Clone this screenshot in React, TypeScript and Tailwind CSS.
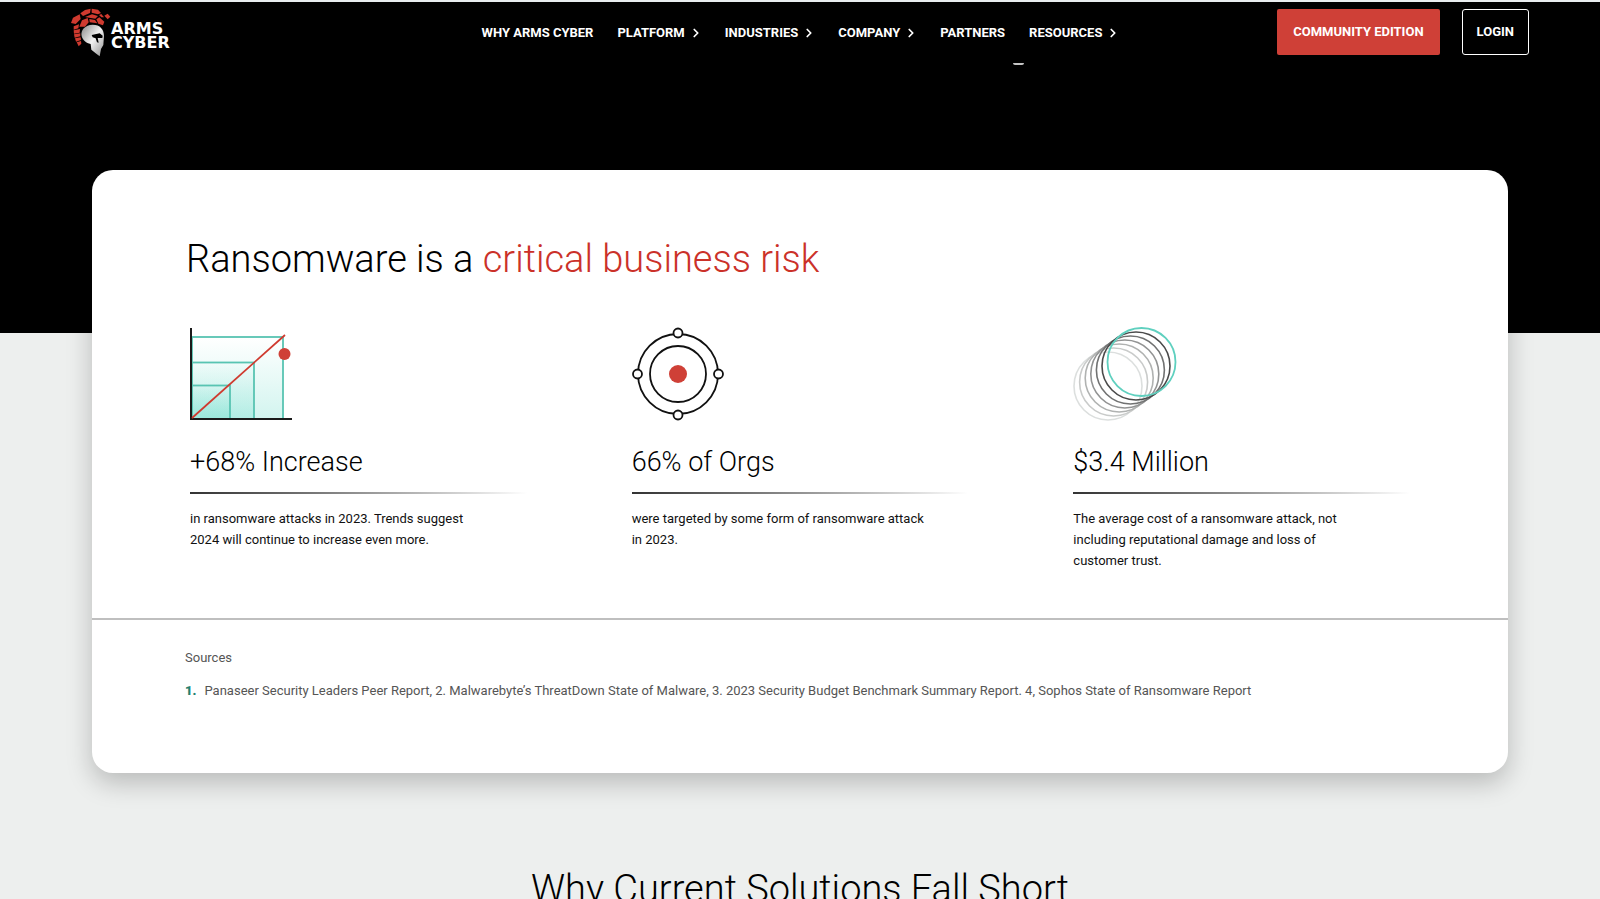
import { ChevronRight } from "lucide-react"

const navItems = [
  { label: "WHY ARMS CYBER", menu: false },
  { label: "PLATFORM", menu: true },
  { label: "INDUSTRIES", menu: true },
  { label: "COMPANY", menu: true },
  { label: "PARTNERS", menu: false },
  { label: "RESOURCES", menu: true },
]

const stats = [
  {
    icon: <GrowthIcon />,
    title: "+68% Increase",
    text: "in ransomware attacks in 2023. Trends suggest 2024 will continue to increase even more.",
  },
  {
    icon: <TargetIcon />,
    title: "66% of Orgs",
    text: "were targeted by some form of ransomware attack in 2023.",
  },
  {
    icon: <RingsIcon />,
    title: "$3.4 Million",
    text: "The average cost of a ransomware attack, not including reputational damage and loss of customer trust.",
  },
]

function Logo() {
  return (
    <a href="#" aria-label="Arms Cyber" className="flex items-center">
      <svg viewBox="33 22 108 150" className="h-[50px] w-9 overflow-visible" aria-hidden="true">
        <defs>
          <linearGradient id="helmet" x1="0" y1="0" x2="1" y2="1">
            <stop offset="0" stopColor="#8a8a8a" />
            <stop offset="0.5" stopColor="#f2f2f2" />
            <stop offset="1" stopColor="#8f8f8f" />
          </linearGradient>
        </defs>
        {/* crest */}
        <g fill="#cf3a2f">
          <path d="M33 67 L39 51 L59 41 L62 55 L47 70 Z" />
          <path d="M61 38 L75 28 L92 24 L90 37 L69 46 Z" />
          <path d="M95 24 L114 27 L123 37 L114 41 L95 36 Z" />
          <path d="M133 45 L143 39 L151 48 L143 56 Z" />
          <path d="M58 78 L66 59 L83 52 L86 65 L75 78 Z" />
          <path d="M75 49 L96 41 L114 46 L106 54 L88 51 Z" />
          <path d="M88 55 L105 58 L112 68 L89 65 Z" />
          <path d="M109 56 L118 50 L133 63 L129 74 L115 69 Z" />
          <path d="M117 43 L124 40 L132 50 L124 50 Z" />
          <path d="M41 77 L57 71 L55 83 L41 87 Z" />
          <path d="M41 89 L60 85 L59 96 L42 99 Z" />
          <path d="M42 101 L61 98 L61 107 L44 111 Z" />
          <path d="M45 113 L62 110 L63 118 L48 123 Z" />
          <path d="M50 125 L63 121 L64 129 L56 137 Z" />
        </g>
        <path
          d="M65 107 C61 88 75 73 98 72 C121 72 131 86 132 105 L130 133 L123 145 L119 167 L107 158 L94 147 L92 130 C78 128 69 119 65 107 Z"
          fill="url(#helmet)"
        />
        {/* visor */}
        <path d="M95 103 L119 98 L128 105 L127 112 L113 112 L116 126 L111 125 L107 113 L98 110 Z" fill="#000" />
      </svg>
      <span className="ml-1 pt-1.5 font-['DejaVu_Sans',sans-serif] text-base leading-[14px] font-bold text-white">
        ARMS
        <br />
        CYBER
      </span>
    </a>
  )
}

function GrowthIcon() {
  return (
    <svg viewBox="0 0 104 94" className="h-[94px] w-[104px]" aria-hidden="true">
      <defs>
        <linearGradient id="growth" x1="0" y1="0" x2="0" y2="1">
          <stop offset="0" stopColor="#5fd9c6" stopOpacity="0" />
          <stop offset="1" stopColor="#5fd9c6" stopOpacity="0.28" />
        </linearGradient>
      </defs>
      <g fill="url(#growth)" stroke="#58c4b2" strokeWidth="1.8">
        <rect x="2" y="10" width="91" height="82" />
        <rect x="2" y="35.5" width="62" height="56.5" />
        <rect x="2" y="58.5" width="38" height="33.5" />
      </g>
      <path d="M1 1 V92 H102" fill="none" stroke="#1a1a1a" strokeWidth="2" />
      <path d="M2 91 L95 8" stroke="#cf3a2f" strokeWidth="1.8" />
      <circle cx="94.5" cy="27" r="6" fill="#cf4037" />
    </svg>
  )
}

function TargetIcon() {
  return (
    <svg viewBox="0 0 94 94" className="h-[94px] w-[94px]" aria-hidden="true">
      <g fill="#fff" stroke="#111" strokeWidth="1.8">
        <circle cx="46" cy="47" r="40" />
        <circle cx="46" cy="47" r="28" />
        <circle cx="46" cy="6" r="4.5" />
        <circle cx="46" cy="88" r="4.5" />
        <circle cx="5.5" cy="47" r="4.5" />
        <circle cx="86.5" cy="47" r="4.5" />
      </g>
      <circle cx="46" cy="47" r="9" fill="#cf4037" />
    </svg>
  )
}

function RingsIcon() {
  const rings = ["#dcdfde", "#c9cbca", "#b0b2b1", "#929393", "#717272", "#4a4a4a"]
  return (
    <svg viewBox="0 0 104 94" className="h-[94px] w-[104px]" aria-hidden="true">
      <g fill="none" strokeWidth="1.6">
        {rings.map((color, i) => (
          <circle key={color} cx={35 + i * 5.6} cy={59 - i * 4} r="34" stroke={color} />
        ))}
        <circle cx="68.5" cy="35" r="34" stroke="#5fd0bf" strokeWidth="1.8" />
      </g>
    </svg>
  )
}

function Header() {
  return (
    <header className="relative grid h-[62px] grid-cols-[1fr_auto_1fr] items-center bg-black px-[71px] text-white">
      <Logo />
      <nav className="flex items-center gap-6 text-[13px] leading-5 font-bold whitespace-nowrap">
        {navItems.map((item) => (
          <a key={item.label} href="#" className="flex items-center gap-1">
            {item.label}
            {item.menu && <ChevronRight className="-mr-0.5 h-3.5 w-3.5" strokeWidth={3} />}
          </a>
        ))}
      </nav>
      <div className="flex justify-end gap-[22px] pb-0.5 text-[13px] font-bold whitespace-nowrap">
        <button className="h-[46px] rounded-[2px] bg-[#cf4037] px-4">COMMUNITY EDITION</button>
        <button className="h-[46px] rounded-[3px] border border-white px-[14px]">LOGIN</button>
      </div>
      <span className="absolute top-[61px] left-[1013px] h-0.5 w-[11px] rounded-b-full bg-[#c4c4c4]" />
    </header>
  )
}

export default function App() {
  return (
    <div className="border-t-2 border-[#e9edef] bg-[#edefee] font-['Roboto',sans-serif] text-black">
      <Header />
      <main className="bg-[linear-gradient(#000_269px,#edefee_269px)] px-[92px] pt-[106px]">
        <section className="rounded-[21px] bg-white shadow-[0_10px_26px_rgba(0,0,0,0.22)]">
          <div className="border-b-2 border-[#bfbfbf] px-[94px] pt-[65px] pb-[47px]">
            <h1 className="text-[38px] leading-[48px] font-light">
              Ransomware is a <span className="text-[#cb3129]">critical business risk</span>
            </h1>
            <div className="mt-11 grid grid-cols-3 gap-x-[105px] px-1">
              {stats.map((stat) => (
                <div key={stat.title}>
                  {stat.icon}
                  <h2 className="mt-[23px] text-[27px] leading-9 font-light">{stat.title}</h2>
                  <div className="mt-3 h-0.5 bg-gradient-to-r from-[#333] to-white" />
                  <p className="mt-[14px] pr-10 text-[13px] leading-[21px] text-[#111]">{stat.text}</p>
                </div>
              ))}
            </div>
          </div>
          <div className="px-[93px] pt-[27px] pb-[72px] text-[13px] leading-[21px] text-[#555]">
            <p>Sources</p>
            <p className="mt-3">
              <span className="mr-2 font-black text-[#23806f]">1.</span>
              Panaseer Security Leaders Peer Report, 2. Malwarebyte’s ThreatDown State of Malware, 3. 2023 Security
              Budget Benchmark Summary Report. 4, Sophos State of Ransomware Report
            </p>
          </div>
        </section>
        <h2 className="pt-[92px] text-center text-[38px] leading-[48px] font-light">Why Current Solutions Fall Short</h2>
      </main>
    </div>
  )
}
